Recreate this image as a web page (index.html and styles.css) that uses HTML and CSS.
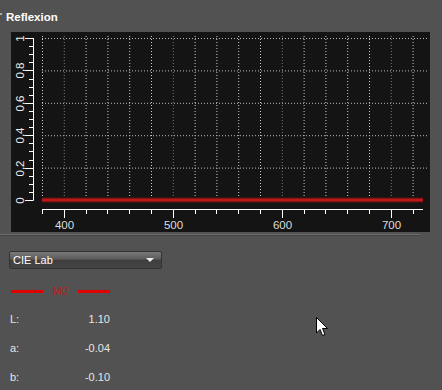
FILE: index.html
```html
<!DOCTYPE html>
<html lang="fr">
<head>
  <meta charset="UTF-8" />
  <title>Reflexion</title>
  <link rel="stylesheet" href="styles.css">
</head>
<body>

<div class="panel-head">
  <span class="grip"></span>
  <span class="title">Reflexion</span>
</div>

<div class="chart">
  <svg id="plot" width="419" height="200" viewBox="0 0 419 200"></svg>
</div>

<div class="sep"></div>

<div class="controls">
  <div class="combo">
    <span>CIE Lab</span>
    <span class="arrow"></span>
  </div>

  <div class="legend">
    <span class="swatch"></span>
    <span class="name">M0</span>
    <span class="swatch"></span>
  </div>

  <div class="values">
    <div class="row"><span class="key">L:</span><span class="val">1.10</span></div>
    <div class="row"><span class="key">a:</span><span class="val">-0.04</span></div>
    <div class="row"><span class="key">b:</span><span class="val">-0.10</span></div>
  </div>
</div>

<svg class="cursor" width="13" height="20" viewBox="0 0 13 20">
  <path d="M0.5 0.5 L0.5 16 L4 12.5 L6.5 18.5 L9 17.5 L6.5 11.5 L11.5 11.5 Z" fill="#fff" stroke="#000" stroke-width="1"/>
</svg>

<script>
  const svg = document.getElementById("plot");
  const NS = "http://www.w3.org/2000/svg";
  const left = 31, step = 21.8, top0 = 6, ystep = 32.4;

  function el(name, attrs) {
    const e = document.createElementNS(NS, name);
    for (const k in attrs) e.setAttribute(k, attrs[k]);
    svg.appendChild(e);
    return e;
  }

  // grille
  for (let i = 0; i < 18; i++) {
    const x = left + i * step + 0.5;
    const major = (i - 1) % 5 === 0;
    el("line", { x1: x, y1: 4, x2: x, y2: 168, stroke: major ? "#777" : "#ccc", "stroke-dasharray": "1 2" });
  }
  for (let j = 0; j < 5; j++) {
    const y = top0 + j * ystep + 0.5;
    el("line", { x1: left, y1: y, x2: 416, y2: y, stroke: "#bbb", "stroke-dasharray": "1 2" });
  }

  // axe Y
  el("line", { x1: 22.5, y1: top0, x2: 22.5, y2: 168.5, stroke: "#fff" });
  const ylabels = ["1", "0,8", "0,6", "0,4", "0,2", "0"];
  for (let k = 0; k <= 20; k++) {
    const y = Math.round(top0 + k * ystep / 4) + 0.5;
    const major = k % 4 === 0;
    el("line", { x1: major ? 14 : 18, y1: y, x2: 22.5, y2: y, stroke: "#fff" });
    if (major) {
      const t = el("text", { x: 0, y: 0, transform: `translate(13 ${y}) rotate(-90)`, "text-anchor": "middle", fill: "#eee", "font-size": 11.5 });
      t.textContent = ylabels[k / 4];
    }
  }

  // courbe M0
  el("line", { x1: left, y1: 168, x2: 412, y2: 168, stroke: "#5a0e0e", "stroke-width": 5 });
  el("line", { x1: left, y1: 168, x2: 412, y2: 168, stroke: "#b81a1a", "stroke-width": 3 });

  // axe X
  el("line", { x1: left, y1: 177.5, x2: 412, y2: 177.5, stroke: "#fff" });
  for (let i = 0; i < 18; i++) {
    const x = Math.round(left + i * step) + 0.5;
    const major = (i - 1) % 5 === 0;
    el("line", { x1: x, y1: 177.5, x2: x, y2: major ? 186 : 182, stroke: "#fff" });
    if (major) {
      const t = el("text", { x: x, y: 197, "text-anchor": "middle", fill: "#ddd", "font-size": 11.5 });
      t.textContent = 380 + i * 20;
    }
  }
</script>

</body>
</html>
```

FILE: styles.css
```css
body {
  background: #525252;
  color: #e6e6e6;
  font-family: "Liberation Sans", Arial, sans-serif;
  font-size: 11px;
  margin: 0;
  padding: 0;
  width: 442px;
  height: 390px;
  overflow: hidden;
  position: relative;
}
.panel-head {
  height: 32px;
  display: flex;
  align-items: flex-start;
}
.grip {
  width: 2px;
  height: 2px;
  background: #aaa;
  margin-top: 13px;
}
.title {
  font-weight: bold;
  font-size: 11.5px;
  color: #fff;
  margin-left: 4px;
  margin-top: 11px;
}
.chart {
  margin-left: 11px;
  width: 419px;
  height: 200px;
  background: #141414;
}
.chart svg {
  display: block;
  overflow: visible;
  font-family: "Liberation Sans", Arial, sans-serif;
}
.sep {
  margin-top: 2px;
  width: 420px;
  height: 0;
  border-top: 1px solid #6e6e6e;
  border-bottom: 1px solid #434343;
}
.controls {
  padding-left: 9px;
  padding-top: 15px;
}
.combo {
  width: 148px;
  height: 16px;
  border: 1px solid #333;
  border-radius: 2px;
  background: linear-gradient(#7a7a7a, #5a5a5a 45%, #3e3e3e 50%, #444);
  display: flex;
  align-items: center;
  justify-content: space-between;
  padding-left: 3px;
  color: #fff;
}
.arrow {
  width: 0;
  height: 0;
  border-left: 4px solid transparent;
  border-right: 4px solid transparent;
  border-top: 4px solid #eee;
  margin-right: 7px;
}
.legend {
  display: flex;
  align-items: center;
  height: 16px;
  margin-top: 14px;
  margin-left: 2px;
}
.swatch {
  width: 32px;
  height: 3px;
  background: #e00000;
}
.name {
  color: #b82020;
  width: 35px;
  text-align: center;
}
.values {
  margin-top: 5px;
  margin-left: 1px;
}
.row {
  display: flex;
  height: 29px;
  align-items: center;
}
.key {
  width: 60px;
}
.val {
  width: 40px;
  text-align: right;
}
.cursor {
  position: absolute;
  left: 316px;
  top: 317px;
}
```
